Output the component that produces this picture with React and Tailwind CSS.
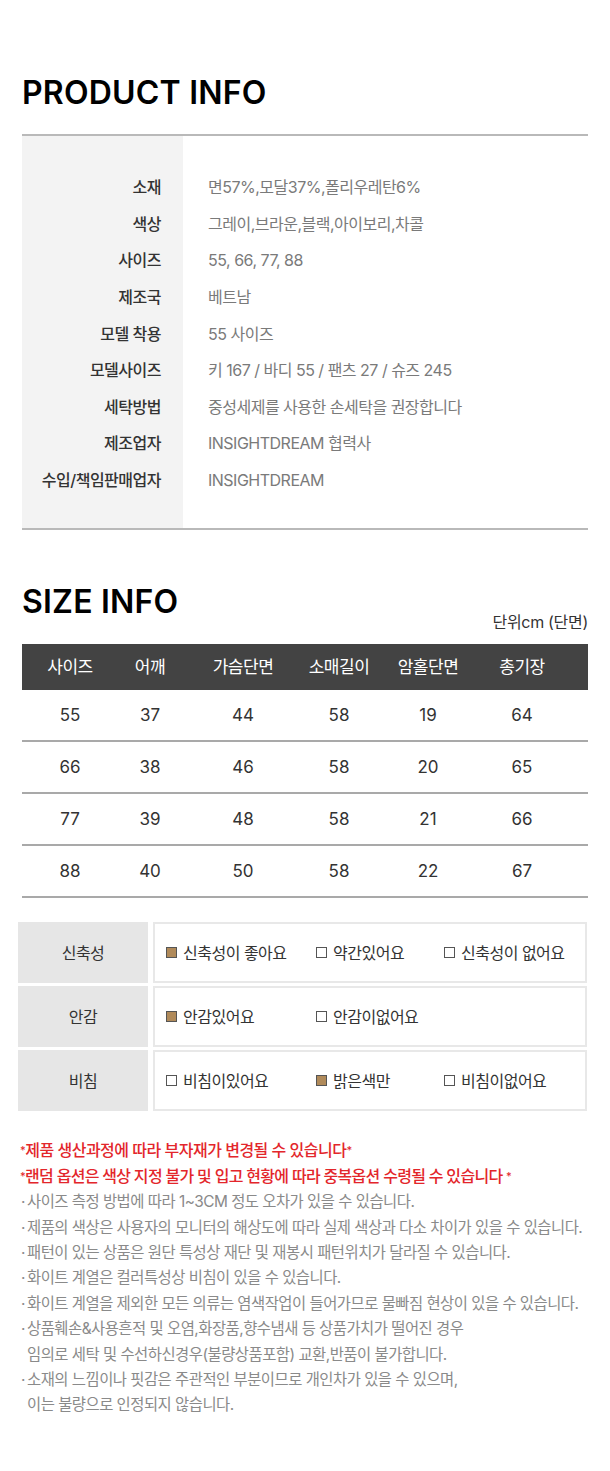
const KR = { fontFamily: '"Inter", "Noto Sans CJK KR", sans-serif' };

const productInfo = [
  ["소재", "면57%,모달37%,폴리우레탄6%"],
  ["색상", "그레이,브라운,블랙,아이보리,차콜"],
  ["사이즈", "55, 66, 77, 88"],
  ["제조국", "베트남"],
  ["모델 착용", "55 사이즈"],
  ["모델사이즈", "키 167 / 바디 55 / 팬츠 27 / 슈즈 245"],
  ["세탁방법", "중성세제를 사용한 손세탁을 권장합니다"],
  ["제조업자", "INSIGHTDREAM 협력사"],
  ["수입/책임판매업자", "INSIGHTDREAM"],
];

const sizeHead = ["사이즈", "어깨", "가슴단면", "소매길이", "암홀단면", "총기장"];
const sizeRows = [
  ["55", "37", "44", "58", "19", "64"],
  ["66", "38", "46", "58", "20", "65"],
  ["77", "39", "48", "58", "21", "66"],
  ["88", "40", "50", "58", "22", "67"],
];

const features = [
  ["신축성", [["신축성이 좋아요", true], ["약간있어요", false], ["신축성이 없어요", false]]],
  ["안감", [["안감있어요", true], ["안감이없어요", false]]],
  ["비침", [["비침이있어요", false], ["밝은색만", true], ["비침이없어요", false]]],
];

const notes = [
  ["사이즈 측정 방법에 따라 1~3CM 정도 오차가 있을 수 있습니다."],
  ["제품의 색상은 사용자의 모니터의 해상도에 따라 실제 색상과 다소 차이가 있을 수 있습니다."],
  ["패턴이 있는 상품은 원단 특성상 재단 및 재봉시 패턴위치가 달라질 수 있습니다."],
  ["화이트 계열은 컬러특성상 비침이 있을 수 있습니다."],
  ["화이트 계열을 제외한 모든 의류는 염색작업이 들어가므로 물빠짐 현상이 있을 수 있습니다."],
  ["상품훼손&사용흔적 및 오염,화장품,향수냄새 등 상품가치가 떨어진 경우", "임의로 세탁 및 수선하신경우(불량상품포함) 교환,반품이 불가합니다."],
  ["소재의 느낌이나 핏감은 주관적인 부분이므로 개인차가 있을 수 있으며,", "이는 불량으로 인정되지 않습니다."],
];

function Check({ on }) {
  return (
    <span
      className={`inline-block shrink-0 w-[11px] h-[11px] border border-[#555] ${
        on ? "bg-[#b08a5a]" : "bg-white"
      }`}
    />
  );
}

function Title({ children }) {
  return (
    <h2
      className="text-[32px] leading-[40px] font-semibold text-black tracking-[0.2px]"
      style={{ fontFamily: '"Inter", "Lato", sans-serif' }}
    >
      {children}
    </h2>
  );
}

export default function App() {
  return (
    <div className="w-[610px] bg-white pt-[73px] pb-[54px]" style={KR}>
      {/* product info */}
      <div className="px-[22px]">
        <Title>PRODUCT INFO</Title>
        <div className="mt-[21px] border-t-2 border-b-2 border-[#b9b9b9] flex">
          <div className="w-[161px] bg-[#f3f3f3] pt-[33px] pb-[30px] pr-[22px]">
            {productInfo.map(([k]) => (
              <div
                key={k}
                className="h-[36.6px] flex items-center justify-end text-[16px] font-medium text-[#333] tracking-[-0.5px]"
              >
                {k}
              </div>
            ))}
          </div>
          <div className="flex-1 pl-[25px] pt-[33px] pb-[30px]">
            {productInfo.map(([k, v]) => (
              <div
                key={k}
                className="h-[36.6px] flex items-center text-[16px] text-[#7a7a7a] tracking-[-0.5px]"
              >
                {v}
              </div>
            ))}
          </div>
        </div>
      </div>

      {/* size info */}
      <div className="px-[22px] mt-[52px]">
        <div className="flex justify-between items-end">
          <div className="mb-[12px]">
            <Title>SIZE INFO</Title>
          </div>
          <span className="text-[16px] leading-6 text-[#333] tracking-[-0.3px]">단위cm (단면)</span>
        </div>
        <div className="mt-[10px]">
          <div className="grid grid-cols-[96px_64px_122px_70px_108px_106px] h-[46px] bg-[#434343] text-white text-[17px] tracking-[-0.5px]">
            {sizeHead.map((h, i) => (
              <div
                key={h}
                className={`flex items-center justify-center ${i === 5 ? "pr-[26px]" : ""}`}
              >
                {h}
              </div>
            ))}
          </div>
          {sizeRows.map((r) => (
            <div
              key={r[0]}
              className="grid grid-cols-[96px_64px_122px_70px_108px_106px] h-[52px] border-b-2 border-[#a9a9a9] text-[17px] text-[#333]"
            >
              {r.map((c, i) => (
                <div
                  key={i}
                  className={`flex items-center justify-center ${i === 5 ? "pr-[26px]" : ""}`}
                >
                  {c}
                </div>
              ))}
            </div>
          ))}
        </div>
      </div>

      {/* features */}
      <div className="mt-[24px] pl-[18px] pr-[23px] flex flex-col gap-[3px]">
        {features.map(([label, opts]) => (
          <div key={label} className="flex gap-[5px] h-[61px]">
            <div className="w-[130px] bg-[#e6e6e6] flex items-center justify-center text-[16px] text-[#333] tracking-[-0.5px]">
              {label}
            </div>
            <div className="flex-1 border-2 border-[#e8e8e8] grid grid-cols-[150px_128px_1fr] items-center pl-[11px] text-[16px] text-[#333] tracking-[-0.5px]">
              {opts.map(([t, on]) => (
                <div key={t} className="flex items-center gap-[6px]">
                  <Check on={on} />
                  <span>{t}</span>
                </div>
              ))}
            </div>
          </div>
        ))}
      </div>

      {/* notes */}
      <div className="mt-[27px] px-[20px] text-[15.4px] leading-[25.4px] tracking-[-0.5px]">
        <p className="text-[#e3262b] font-medium text-[16px]">
          <span className="text-[11px] align-top">*</span>제품 생산과정에 따라 부자재가 변경될 수 있습니다
          <span className="text-[11px] align-top">*</span>
        </p>
        <p className="text-[#e3262b] font-medium text-[16px] tracking-[-0.7px]">
          <span className="text-[11px] align-top">*</span>랜덤 옵션은 색상 지정 불가 및 입고 현황에 따라 중복옵션 수령될 수 있습니다{" "}
          <span className="text-[11px] align-top">*</span>
        </p>
        {notes.map((lines, i) => (
          <div key={i} className="flex text-[#8a8a8a]">
            <span className="w-[7px] shrink-0 pl-[1px]">·</span>
            <div>
              {lines.map((l) => (
                <p key={l}>{l}</p>
              ))}
            </div>
          </div>
        ))}
      </div>
    </div>
  );
}
